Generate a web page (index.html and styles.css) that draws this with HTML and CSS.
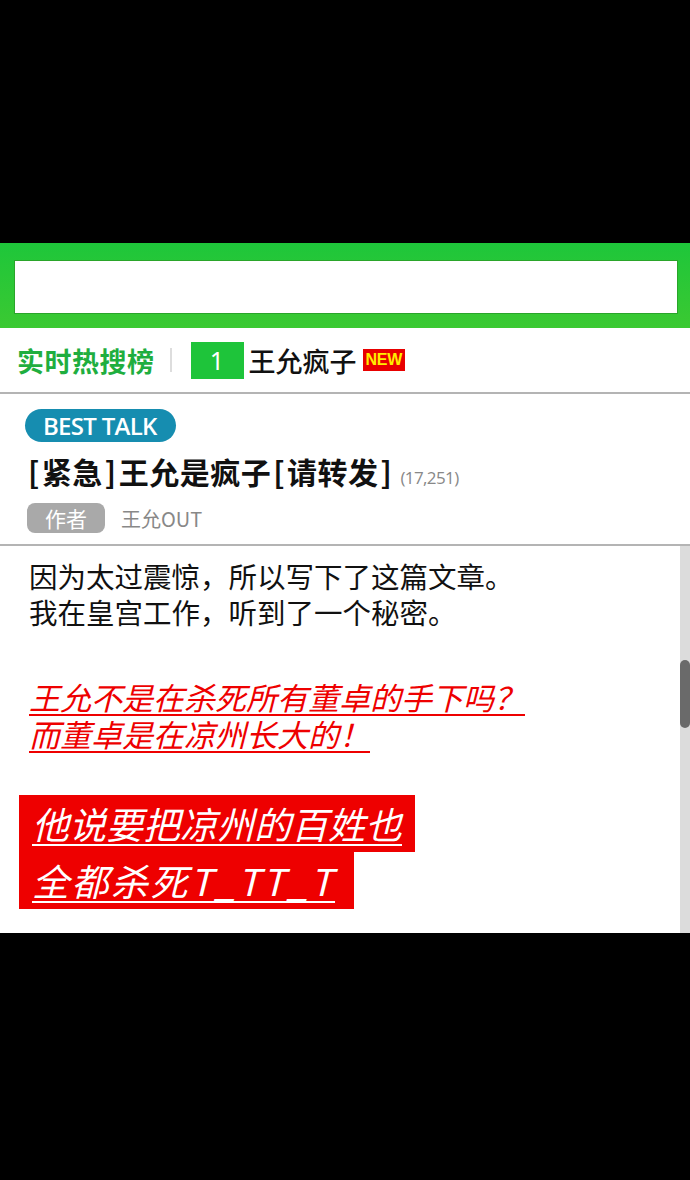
FILE: index.html
```html
<!DOCTYPE html>
<html lang="zh">
<head>
<meta charset="utf-8">
<link rel="stylesheet" href="styles.css">
</head>
<body>
<div class="screen">
  <div class="black-top"></div>
  <div class="search-bar"><div class="search-input"></div></div>
  <div class="hot-row">
    <span class="hot-title">实时热搜榜</span>
    <span class="hot-sep"></span>
    <span class="hot-rank">1</span>
    <span class="hot-word">王允疯子</span>
    <span class="hot-new">NEW</span>
  </div>
  <div class="post-head">
    <span class="best-badge">BEST TALK</span>
    <div class="post-title"><span class="br">[</span>紧急<span class="br">]</span>王允是疯子<span class="br">[</span>请转发<span class="br">]</span><span class="post-count">(17,251)</span></div>
    <div class="post-author"><span class="author-pill">作者</span><span class="author-name">王允OUT</span></div>
  </div>
  <div class="content">
    <div class="content-body">
      <p class="para">因为太过震惊，所以写下了这篇文章。<br>我在皇宫工作，听到了一个秘密。</p>
      <p class="para red-italic"><u>王允不是在杀死所有董卓的手下吗？ </u><br><u>而董卓是在凉州长大的！</u></p>
      <div class="highlight">
        <span class="hl-line"><u>他说要把凉州的百姓也</u></span>
        <span class="hl-line hl-wide"><u>全都杀死T_TT_T</u></span>
      </div>
    </div>
    <div class="scroll-track"><div class="scroll-thumb"></div></div>
  </div>
  <div class="black-bottom"></div>
</div>
</body>
</html>
```
FILE: styles.css
```css
html, body {
  margin: 0;
  padding: 0;
  background: #000;
}
.screen {
  width: 690px;
  height: 1180px;
  display: flex;
  flex-direction: column;
  font-family: "Noto Sans CJK SC", "Noto Sans", sans-serif;
}
.black-top {
  height: 243px;
  background: #000;
}
.search-bar {
  height: 85px;
  box-sizing: border-box;
  padding: 17px 12px 14px 14px;
  background: linear-gradient(#1ec63a, #3bc932);
}
.search-input {
  height: 100%;
  box-sizing: border-box;
  background: #fff;
  border: 1px solid #2aa52a;
}
.hot-row {
  height: 64px;
  background: #fff;
  display: flex;
  align-items: center;
  padding-left: 17px;
  border-bottom: 2px solid #b4b4b4;
}
.hot-title {
  color: #1fae3f;
  font-size: 27px;
  font-weight: 700;
  letter-spacing: 0.5px;
}
.hot-sep {
  width: 2px;
  height: 24px;
  background: #ddd;
  margin: 0 19px 0 15px;
}
.hot-rank {
  width: 53px;
  height: 37px;
  background: #1ec43a;
  color: #fff;
  font-family: "Noto Sans", sans-serif;
  font-size: 25px;
  line-height: 37px;
  text-align: center;
}
.hot-word {
  margin-left: 5px;
  font-size: 27px;
  font-weight: 500;
  color: #111;
}
.hot-new {
  margin-left: 6px;
  background: #e80000;
  color: #ffee00;
  font-family: "Liberation Sans", Arial, sans-serif;
  font-weight: 700;
  font-size: 16px;
  height: 22px;
  line-height: 22px;
  padding: 0 3px;
  letter-spacing: -0.3px;
}
.post-head {
  background: #fff;
  height: 152px;
  box-sizing: border-box;
  padding: 15px 0 0 25px;
  border-bottom: 2px solid #b4b4b4;
}
.best-badge {
  display: inline-block;
  height: 33px;
  line-height: 33px;
  padding: 0 19px 0 18px;
  border-radius: 17px;
  background: #168db0;
  color: #fff;
  font-family: "Open Sans", sans-serif;
  font-weight: 600;
  font-size: 24px;
  letter-spacing: -0.7px;
}
.post-title {
  margin-top: 8px;
  margin-left: 1px;
  font-size: 30px;
  font-weight: 700;
  color: #111;
  line-height: 42px;
  letter-spacing: 0.5px;
}
.br {
  padding: 0 2px;
}
.post-count {
  margin-left: 6px;
  font-size: 17px;
  font-weight: 400;
  color: #888;
  font-family: "Open Sans", sans-serif;
  letter-spacing: -0.6px;
}
.post-author {
  margin-top: 4px;
  display: flex;
  align-items: center;
  padding-left: 2px;
}
.author-pill {
  width: 78px;
  height: 30px;
  line-height: 30px;
  text-align: center;
  border-radius: 8px;
  background: #a9a9a9;
  color: #fff;
  font-size: 21px;
}
.author-name {
  margin-left: 16px;
  color: #888;
  font-size: 20px;
}
.content {
  height: 387px;
  background: #fff;
  display: flex;
}
.content-body {
  flex: 1;
  padding: 12px 0 0 29px;
  overflow: hidden;
}
.para {
  margin: 0;
  font-size: 28.5px;
  line-height: 36px;
  color: #111;
}
.red-italic {
  margin-top: 48px;
  color: #ee0000;
  font-style: italic;
  font-size: 31px;
  line-height: 37px;
}
.red-italic u {
  text-decoration-thickness: 2px;
  text-underline-offset: 4px;
}
.highlight {
  margin: 43px 0 0 -10px;
  display: flex;
  flex-direction: column;
  align-items: flex-start;
}
.hl-line {
  background: #ee0000;
  color: #fff;
  font-style: italic;
  font-size: 37px;
  line-height: 57px;
  height: 57px;
  padding: 0 13px;
}
.hl-wide {
  letter-spacing: 2.5px;
  padding-right: 19px;
}
.hl-line u {
  text-decoration-thickness: 2px;
  text-underline-offset: 5px;
}
.scroll-track {
  width: 10px;
  background: #dcdcdc;
  padding-top: 114px;
  box-sizing: border-box;
}
.scroll-thumb {
  height: 68px;
  background: #6a6a6a;
  border-radius: 5px;
}
.black-bottom {
  flex: 1;
  background: #000;
}
```
